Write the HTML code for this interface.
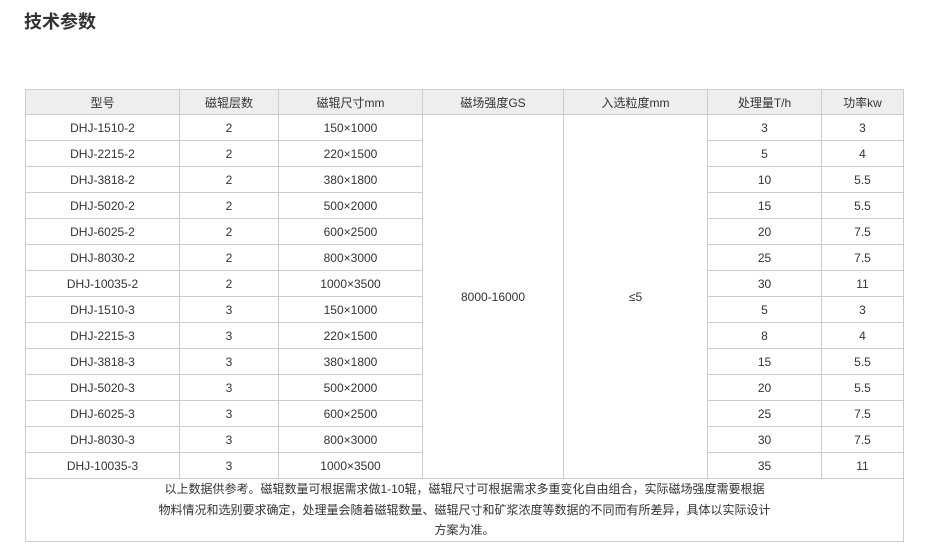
<!DOCTYPE html>
<html><head><meta charset="utf-8"><style>
body{margin:0;background:#fff;width:932px;height:560px;overflow:hidden;font-family:"Liberation Sans","Noto Sans CJK SC",sans-serif;color:#333;}
h1{position:absolute;left:24px;top:10px;margin:0;font-size:18px;font-weight:bold;color:#333;line-height:24px;}
table{position:absolute;left:25px;top:89px;border-collapse:collapse;font-size:12px;table-layout:fixed;width:878px;}
td,th{border:1px solid #ccc;text-align:center;height:25px;padding:0;font-weight:normal;color:#333;}
th{background:#eee;height:24px;}
td.note{height:61px;line-height:20.5px;padding-top:0;}
</style></head><body>
<h1>技术参数</h1>
<table>
<colgroup><col style="width:154px"><col style="width:99px"><col style="width:144px"><col style="width:141px"><col style="width:144px"><col style="width:114px"><col style="width:82px"></colgroup>
<tr><th>型号</th><th>磁辊层数</th><th>磁辊尺寸mm</th><th>磁场强度GS</th><th>入选粒度mm</th><th>处理量T/h</th><th>功率kw</th></tr>
<tr><td>DHJ-1510-2</td><td>2</td><td>150×1000</td><td rowspan="14">8000-16000</td><td rowspan="14">≤5</td><td>3</td><td>3</td></tr>
<tr><td>DHJ-2215-2</td><td>2</td><td>220×1500</td><td>5</td><td>4</td></tr>
<tr><td>DHJ-3818-2</td><td>2</td><td>380×1800</td><td>10</td><td>5.5</td></tr>
<tr><td>DHJ-5020-2</td><td>2</td><td>500×2000</td><td>15</td><td>5.5</td></tr>
<tr><td>DHJ-6025-2</td><td>2</td><td>600×2500</td><td>20</td><td>7.5</td></tr>
<tr><td>DHJ-8030-2</td><td>2</td><td>800×3000</td><td>25</td><td>7.5</td></tr>
<tr><td>DHJ-10035-2</td><td>2</td><td>1000×3500</td><td>30</td><td>11</td></tr>
<tr><td>DHJ-1510-3</td><td>3</td><td>150×1000</td><td>5</td><td>3</td></tr>
<tr><td>DHJ-2215-3</td><td>3</td><td>220×1500</td><td>8</td><td>4</td></tr>
<tr><td>DHJ-3818-3</td><td>3</td><td>380×1800</td><td>15</td><td>5.5</td></tr>
<tr><td>DHJ-5020-3</td><td>3</td><td>500×2000</td><td>20</td><td>5.5</td></tr>
<tr><td>DHJ-6025-3</td><td>3</td><td>600×2500</td><td>25</td><td>7.5</td></tr>
<tr><td>DHJ-8030-3</td><td>3</td><td>800×3000</td><td>30</td><td>7.5</td></tr>
<tr><td>DHJ-10035-3</td><td>3</td><td>1000×3500</td><td>35</td><td>11</td></tr>
<tr><td colspan="7" class="note">以上数据供参考。磁辊数量可根据需求做1-10辊，磁辊尺寸可根据需求多重变化自由组合，实际磁场强度需要根据<br>物料情况和选别要求确定，处理量会随着磁辊数量、磁辊尺寸和矿浆浓度等数据的不同而有所差异，具体以实际设计<br>方案为准。</td></tr>
</table>
</body></html>
